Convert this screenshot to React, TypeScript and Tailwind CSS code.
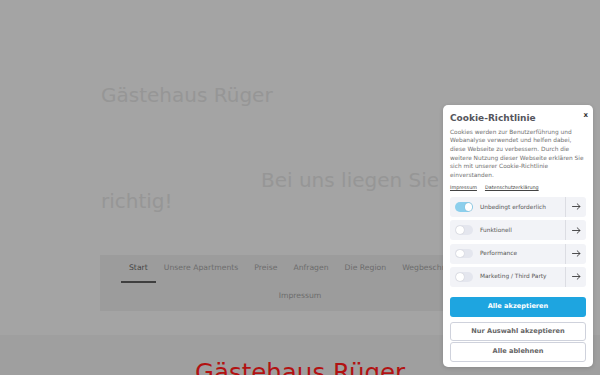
const navItems = [
  "Start",
  "Unsere Apartments",
  "Preise",
  "Anfragen",
  "Die Region",
  "Wegbeschreibung",
  "Impressum",
];

const consentGroups = [
  { label: "Unbedingt erforderlich", on: true },
  { label: "Funktionell", on: false },
  { label: "Performance", on: false },
  { label: "Marketing / Third Party", on: false },
];

function ArrowIcon() {
  return (
    <svg width="9" height="7" viewBox="0 0 9 7" fill="none">
      <path
        d="M0.5 3.5H8M5.2 0.8L8 3.5L5.2 6.2"
        stroke="#3a3a3a"
        strokeWidth="0.9"
        strokeLinecap="round"
        strokeLinejoin="round"
      />
    </svg>
  );
}

function Toggle({ on }: { on: boolean }) {
  return (
    <div
      className={
        on
          ? "flex h-[9.5px] w-[18px] items-center justify-end rounded-full bg-[#8ccfec] px-[1px]"
          : "flex h-[9.5px] w-[18px] items-center justify-start rounded-full bg-[#e4e6ee] px-[1px]"
      }
    >
      <div className="h-[7.5px] w-[7.5px] rounded-full bg-white shadow-[0_0_1px_rgba(0,0,0,0.25)]" />
    </div>
  );
}

function CookieBanner() {
  return (
    <div className="absolute left-[443px] top-[105px] flex h-[262px] w-[150px] flex-col rounded-[5px] bg-white px-[7px] pt-[6.5px] shadow-[0_1px_4px_rgba(0,0,0,0.15)]">
      <button className="absolute right-[5px] top-[6px] text-[7px] font-bold leading-[8px] text-[#333]">
        x
      </button>
      <h3 className="text-[9px] font-bold leading-[12px] text-[#55555c]">
        Cookie-Richtlinie
      </h3>
      <p className="mt-[4px] text-[5.85px] leading-[8.7px] text-[#707070]">
        Cookies werden zur Benutzerführung und Webanalyse verwendet und helfen
        dabei, diese Webseite zu verbessern. Durch die weitere Nutzung dieser
        Webseite erklären Sie sich mit unserer Cookie-Richtlinie einverstanden.
      </p>
      <div className="mt-[3.5px] flex gap-[8px] text-[4.85px] leading-[8.7px] text-[#444]">
        <a className="underline">Impressum</a>
        <a className="underline">Datenschutzerklärung</a>
      </div>

      <div className="mt-[5px] flex flex-col gap-[3.3px]">
        {consentGroups.map((group) => (
          <div
            key={group.label}
            className="flex h-[20px] items-stretch rounded-[3px] bg-[#f2f3f7]"
          >
            <div className="flex flex-1 items-center gap-[7px] pl-[5px]">
              <Toggle on={group.on} />
              <span className="text-[5.85px] text-[#555]">{group.label}</span>
            </div>
            <div className="flex w-[21px] items-center justify-center border-l border-[#dcdde3]">
              <ArrowIcon />
            </div>
          </div>
        ))}
      </div>

      <button className="mt-[10px] h-[20px] rounded-[3px] bg-[#1ea5e0] text-[6.6px] font-bold text-white">
        Alle akzeptieren
      </button>
      <button className="mt-[5px] h-[19.5px] rounded-[3px] border border-[#cfd2dc] text-[6.6px] font-bold text-[#666]">
        Nur Auswahl akzeptieren
      </button>
      <button className="mt-[1px] h-[19.5px] rounded-[3px] border border-[#cfd2dc] text-[6.6px] font-bold text-[#666]">
        Alle ablehnen
      </button>
    </div>
  );
}

export default function App() {
  return (
    <div className="relative h-[375px] w-full overflow-hidden bg-[#a4a4a4] font-['DejaVu_Sans',sans-serif]">
      <header className="h-[335px]">
        <div className="mx-auto w-[400px] pt-[83px]">
          <h1 className="pl-[1px] text-[20px] leading-[24px] text-[#969696]">
            Gästehaus Rüger
          </h1>
          <h2 className="mt-[63px] w-[340px] pl-[1px] indent-[160px] text-[20px] leading-[21px] text-[#969696]">
            Bei uns liegen Sie richtig!
          </h2>

          <nav className="mt-[43px] flex flex-wrap justify-center bg-[#9c9c9c]">
            {navItems.map((item) => (
              <a
                key={item}
                className={
                  item === "Start"
                    ? "flex h-[28px] items-center border-b-2 border-[#3f3f3f] px-[8px] text-[7.7px] text-[#454545]"
                    : "flex h-[28px] items-center border-b-2 border-transparent px-[8px] text-[7.7px] text-[#6c6c6c]"
                }
              >
                {item}
              </a>
            ))}
          </nav>
        </div>
      </header>

      <section className="bg-[#9f9f9f] pt-[23px]">
        <h2 className="text-center text-[24.5px] leading-[30px] text-[#b21212]">
          Gästehaus Rüger
        </h2>
      </section>

      <CookieBanner />
    </div>
  );
}
